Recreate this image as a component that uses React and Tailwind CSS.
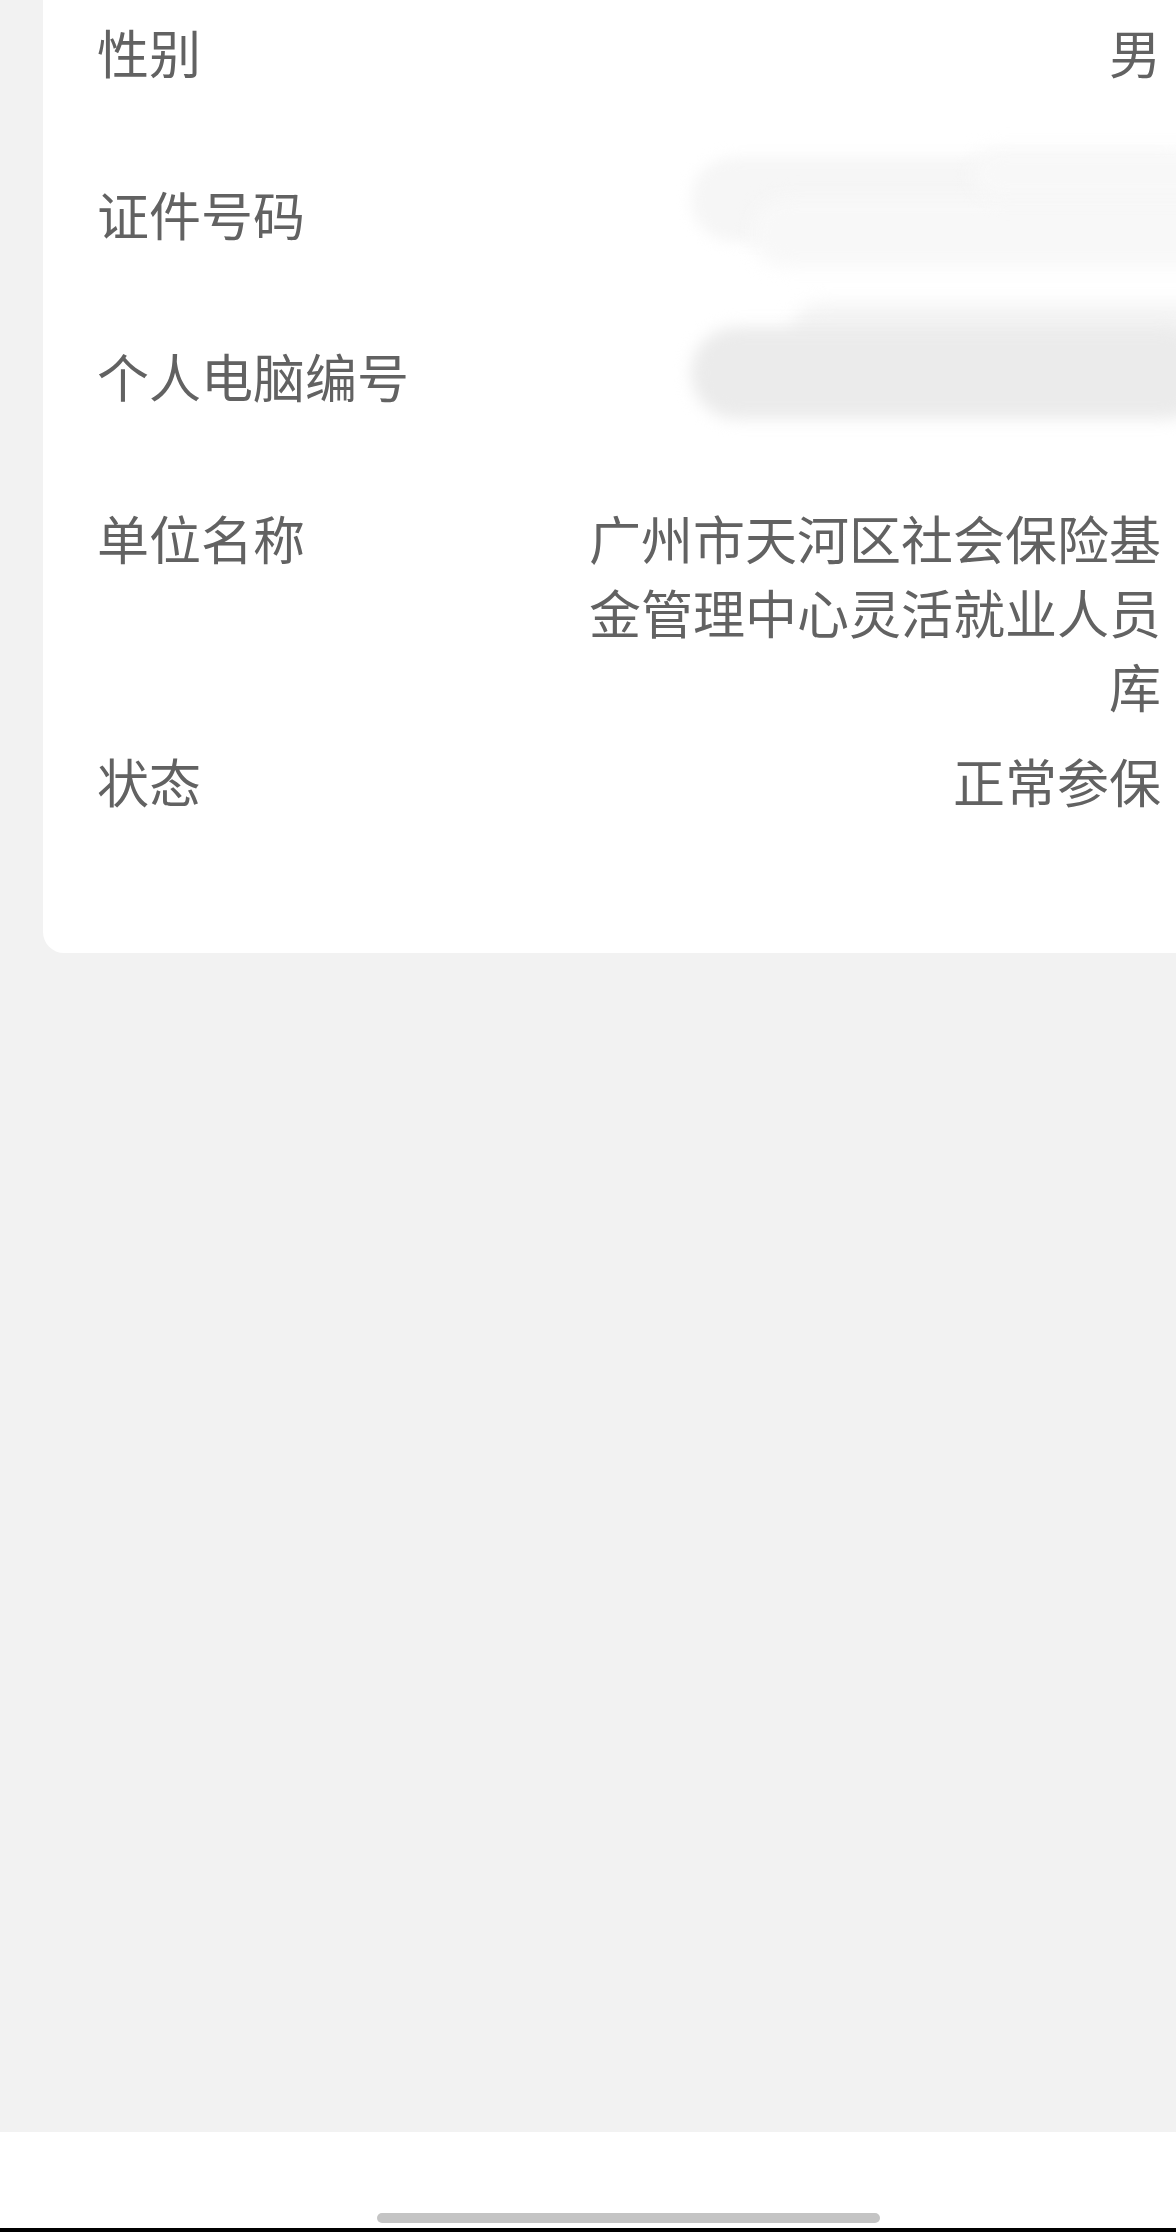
import React from 'react';

const rows = [
  { label: '性别', value: '男' },
  { label: '证件号码', blur: 'light' },
  { label: '个人电脑编号', blur: 'dark' },
  { label: '单位名称', value: '广州市天河区社会保险基金管理中心灵活就业人员库' },
  { label: '状态', value: '正常参保' },
];

const Redacted = ({ tone }) => {
  // smudged-out value, drawn with blurred pills
  if (tone === 'light') {
    return (
      <div className="relative h-[74px] w-[490px] -mr-[20px]">
        <div className="absolute left-0 top-[-20px] h-[85px] w-[520px] rounded-full bg-[#f6f6f6] blur-[7px]" />
        <div className="absolute left-[60px] top-[20px] h-[70px] w-[480px] rounded-full bg-[#f8f8f8] blur-[9px]" />
        <div className="absolute left-[280px] top-[-28px] h-[50px] w-[260px] rounded-full bg-[#f8f8f8] blur-[9px]" />
      </div>
    );
  }
  return (
    <div className="relative h-[74px] w-[490px] -mr-[20px]">
      <div className="absolute left-[100px] top-[-36px] h-[60px] w-[440px] rounded-full bg-[#f4f4f4] blur-[9px]" />
      <div className="absolute left-0 top-[-12px] h-[92px] w-[520px] rounded-full bg-[#ebebeb] blur-[8px]" />
    </div>
  );
};

const InfoRow = ({ label, value, blur }) => (
  <div className="flex items-start justify-between min-h-[162px] pb-[21px]">
    <div className="shrink-0 text-[52px] leading-[74px] text-[#626262]">{label}</div>
    {blur ? (
      <Redacted tone={blur} />
    ) : (
      <div className="max-w-[576px] text-right text-[52px] leading-[74px] text-[#626262]">{value}</div>
    )}
  </div>
);

export default function App() {
  return (
    <div
      className="flex h-[2232px] w-[1176px] flex-col overflow-hidden bg-[#f2f2f2]"
      style={{ fontFamily: '"Noto Sans CJK SC", "Noto Sans", sans-serif' }}
    >
      {/* Info card */}
      <div className="ml-[43px] rounded-bl-[21px] bg-white pl-[54px] pr-[15px] pt-[15px] pb-[47px]">
        {rows.map((r) => (
          <InfoRow key={r.label} {...r} />
        ))}
      </div>

      <div className="flex-1" />

      {/* Bottom bar with home indicator */}
      <div className="flex h-[96px] flex-col items-start justify-end bg-white pb-[5px] pl-[377px]">
        <div className="h-[10px] w-[503px] rounded-full bg-[#c4c4c4]" />
      </div>
      <div className="h-[4px] bg-black" />
    </div>
  );
}
